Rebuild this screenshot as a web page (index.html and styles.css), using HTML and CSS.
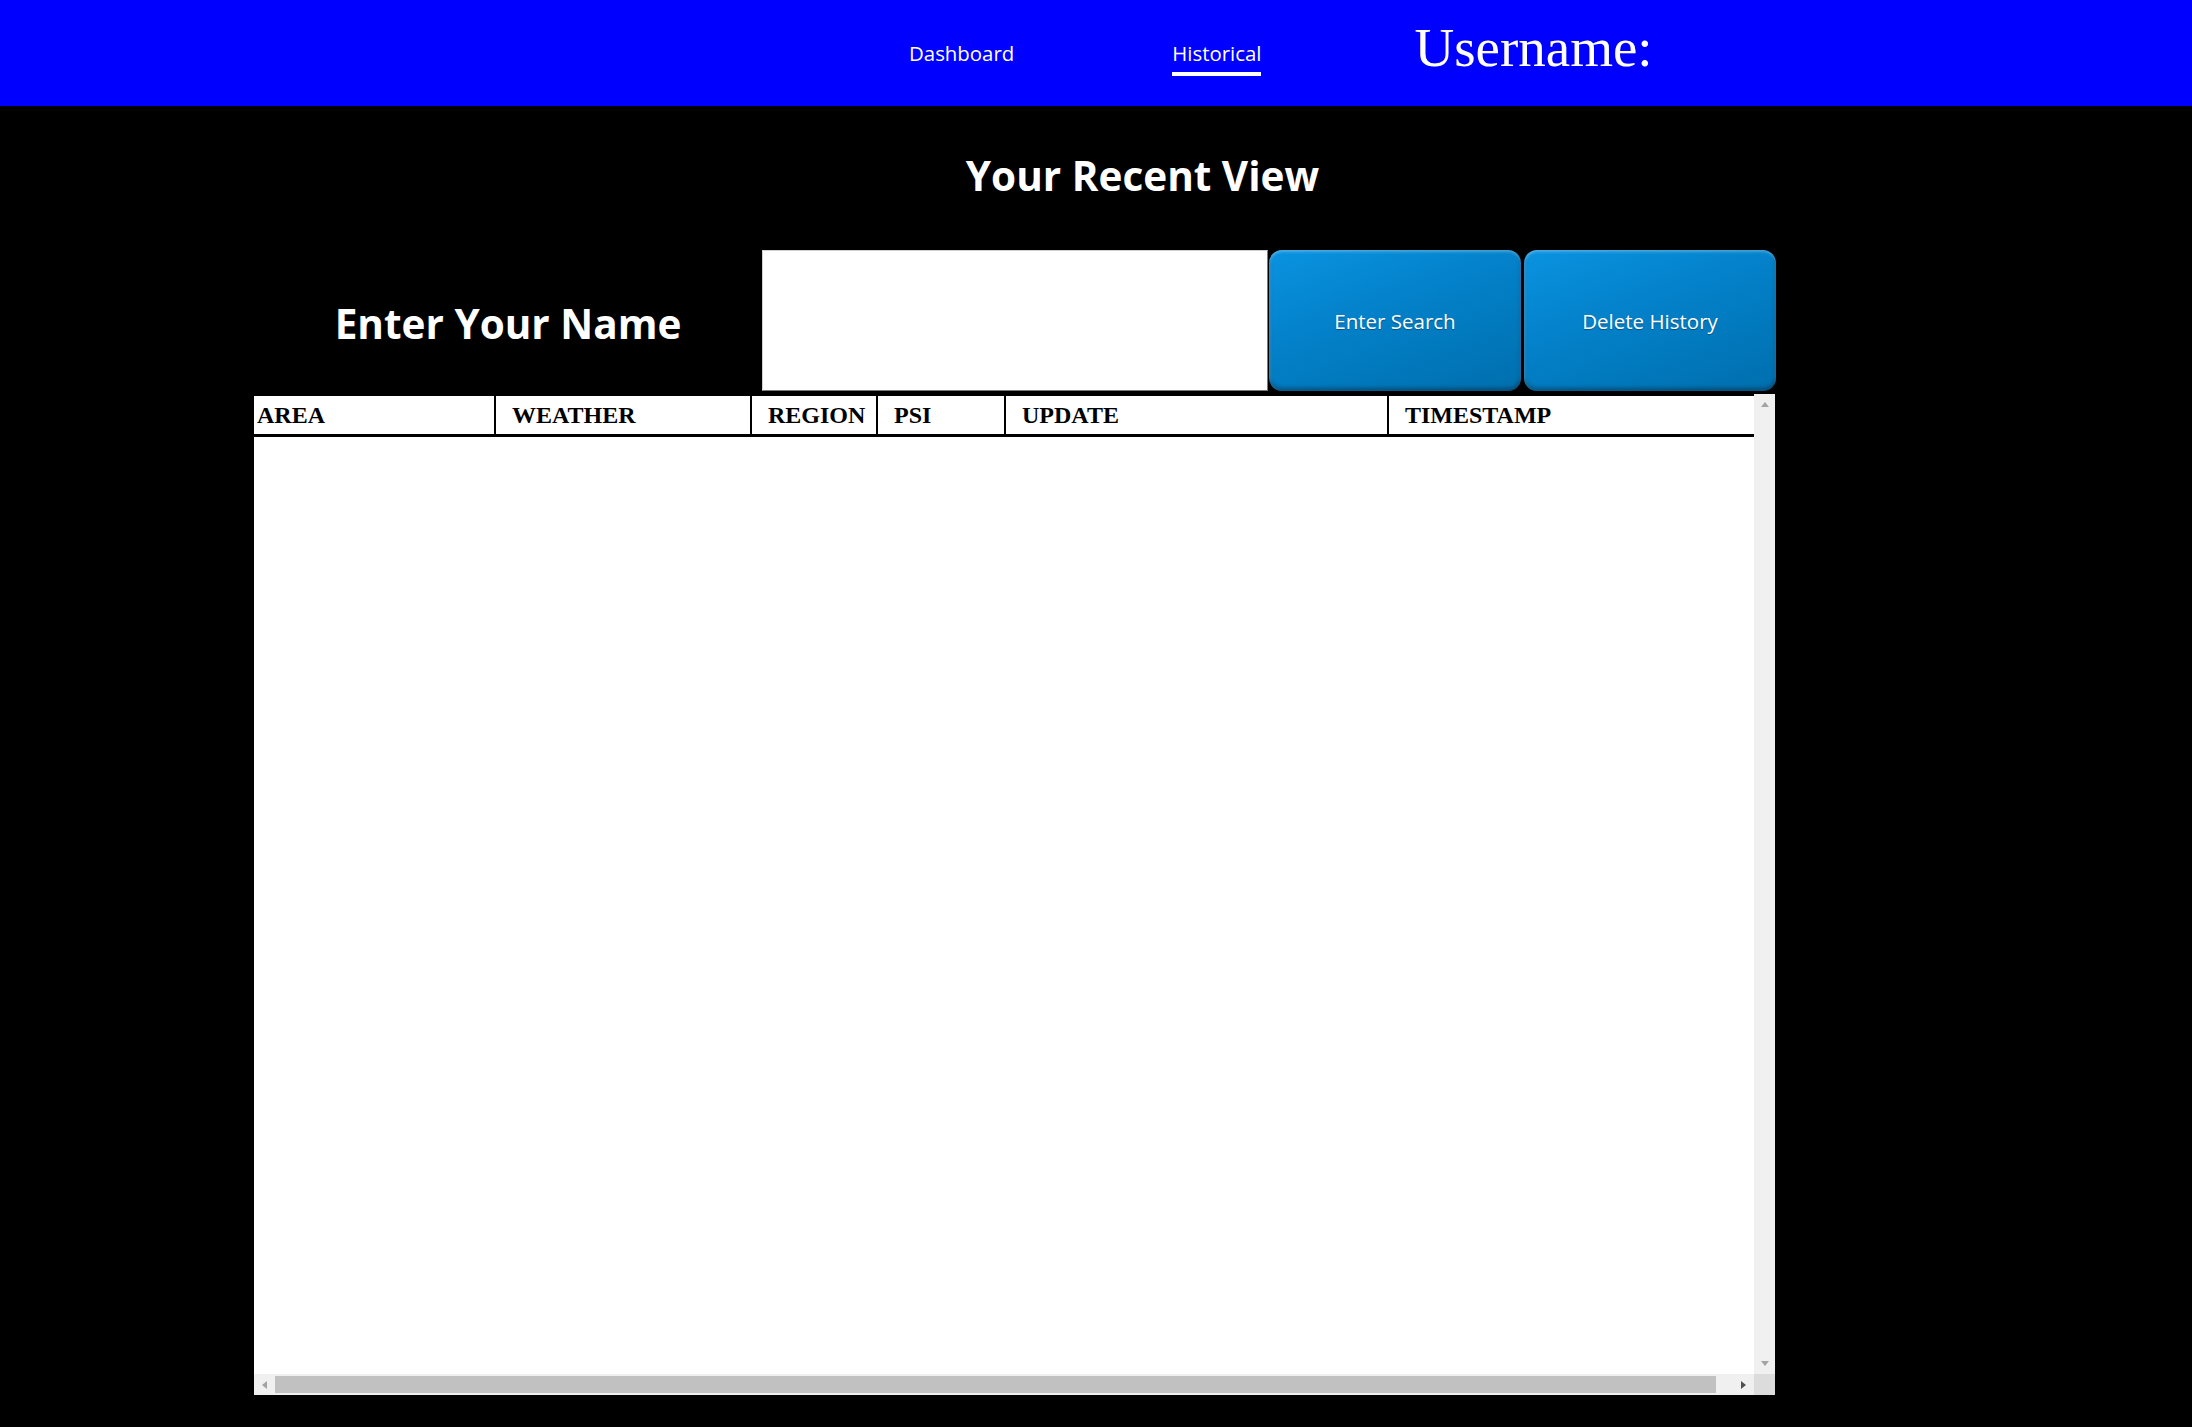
FILE: index.html
```html
<!DOCTYPE html>
<html lang="en">
<head>
<meta charset="utf-8">
<title>Historical</title>
<link rel="stylesheet" href="styles.css">
</head>
<body>
<header class="topbar">
  <nav class="nav">
    <a class="nav-link" href="#">Dashboard</a>
    <a class="nav-link active" href="#">Historical</a>
    <span class="username">Username:</span>
  </nav>
</header>
<main class="content">
  <h1 class="title">Your Recent View</h1>
  <div class="search-row">
    <div class="search-label">Enter Your Name</div>
    <input class="search-input" type="text">
    <button class="btn">Enter Search</button>
    <button class="btn">Delete History</button>
  </div>
  <div class="table-wrap">
    <div class="table-view">
      <table class="history">
        <colgroup>
          <col class="c-area"><col class="c-weather"><col class="c-region"><col class="c-psi"><col class="c-update"><col class="c-time">
        </colgroup>
        <thead>
          <tr>
            <th>AREA</th>
            <th>WEATHER</th>
            <th>REGION</th>
            <th>PSI</th>
            <th>UPDATE</th>
            <th>TIMESTAMP</th>
          </tr>
        </thead>
        <tbody></tbody>
      </table>
    </div>
    <div class="vbar">
      <span class="sb-btn"><span class="arrow arrow-up"></span></span>
      <span class="vtrack"></span>
      <span class="sb-btn"><span class="arrow arrow-down"></span></span>
    </div>
    <div class="hbar">
      <span class="sb-btn"><span class="arrow arrow-left"></span></span>
      <span class="htrack"><span class="hthumb"></span></span>
      <span class="sb-btn"><span class="arrow arrow-right"></span></span>
    </div>
    <div class="sb-corner"></div>
  </div>
</main>
</body>
</html>
```
FILE: styles.css
```css
html, body {
  margin: 0;
  padding: 0;
}
body {
  background: #000;
  min-height: 1427px;
  font-family: "Open Sans", "Noto Sans", sans-serif;
}

.topbar {
  height: 106px;
  background: #0000ff;
}
.nav {
  display: flex;
  align-items: center;
  height: 100%;
  padding-left: 909px;
}
.nav-link {
  position: relative;
  color: #fff;
  text-decoration: none;
  font-size: 20.4px;
}
.nav-link + .nav-link {
  margin-left: 158px;
}
.nav-link.active::after {
  content: "";
  position: absolute;
  left: 0;
  right: 0;
  top: 33px;
  height: 4px;
  background: #fff;
}
.username {
  margin-left: 153px;
  margin-top: -12px;
  color: #fff;
  font-family: "Liberation Serif", "Times New Roman", serif;
  font-size: 55px;
}

.content {
  padding-left: 254px;
  width: 1523px;
}
.title {
  margin: 0;
  height: 144px;
  padding-left: 254px;
  padding-bottom: 6px;
  box-sizing: border-box;
  display: flex;
  align-items: center;
  justify-content: center;
  color: #fff;
  font-size: 40.5px;
  font-weight: 700;
}

.search-row {
  display: flex;
  height: 141px;
  margin-bottom: 3px;
}
.search-label {
  width: 508px;
  display: flex;
  align-items: center;
  justify-content: center;
  padding-top: 6px;
  box-sizing: border-box;
  color: #fff;
  font-size: 40.5px;
  font-weight: 700;
}
.search-input {
  width: 506px;
  height: 141px;
  margin: 0;
  box-sizing: border-box;
  border: 1px solid #7a7a7a;
  border-top-color: #d0d0d0;
  border-left-color: #d0d0d0;
  background: #fff;
  outline: none;
}
.btn {
  width: 252px;
  height: 141px;
  margin: 0 0 0 1px;
  border: none;
  border-radius: 13px;
  background: linear-gradient(160deg, #0a93e0 0%, #0380c8 45%, #006fae 100%);
  box-shadow: inset 0 -3px 4px rgba(0, 0, 0, 0.35), inset 0 2px 3px rgba(255, 255, 255, 0.25), inset 2px 0 3px rgba(255, 255, 255, 0.12);
  color: #fff;
  font-family: "Open Sans", "Noto Sans", sans-serif;
  font-size: 20.5px;
  text-shadow: 0 1px 1px rgba(0, 0, 0, 0.35);
  cursor: pointer;
}
.btn + .btn {
  margin-left: 3px;
}

/* table with its scroll bars */
.table-wrap {
  display: grid;
  grid-template-columns: 1500px 21px;
  grid-template-rows: 980px 21px;
  width: 1521px;
  background: #fff;
}
.table-view {
  overflow: hidden;
  background: #fff;
}
.vbar, .hbar {
  display: flex;
  background: #f0f0f0;
}
.vbar {
  flex-direction: column;
}
.vtrack, .htrack {
  flex: 1;
  display: flex;
  align-items: center;
}
.hthumb {
  width: 1441px;
  height: 17px;
  background: #c1c1c1;
}
.sb-btn {
  width: 21px;
  height: 21px;
  flex: none;
  display: flex;
  align-items: center;
  justify-content: center;
}
.arrow {
  width: 0;
  height: 0;
  border-style: solid;
  border-color: transparent;
}
.arrow-up {
  border-width: 0 4.5px 5px 4.5px;
  border-bottom-color: #a3a3a3;
}
.arrow-down {
  border-width: 5px 4.5px 0 4.5px;
  border-top-color: #a3a3a3;
}
.arrow-left {
  border-width: 4.5px 5px 4.5px 0;
  border-right-color: #a3a3a3;
}
.arrow-right {
  border-width: 4.5px 0 4.5px 5px;
  border-left-color: #505050;
}
.sb-corner {
  background: #dcdcdc;
}

.history {
  width: 1518px;
  table-layout: fixed;
  border-collapse: collapse;
  font-family: "Liberation Serif", "Times New Roman", serif;
}
.c-area { width: 241px; }
.c-weather { width: 256px; }
.c-region { width: 126px; }
.c-psi { width: 128px; }
.c-update { width: 383px; }
.history th {
  height: 38px;
  padding: 0 0 0 16px;
  text-align: left;
  font-size: 24px;
  font-weight: 700;
  color: #000;
  border-top: 2px solid #000;
  border-bottom: 3px solid #000;
  border-left: 2px solid #000;
  white-space: nowrap;
}
.history th:first-child {
  border-left: none;
  padding-left: 3px;
}
```
